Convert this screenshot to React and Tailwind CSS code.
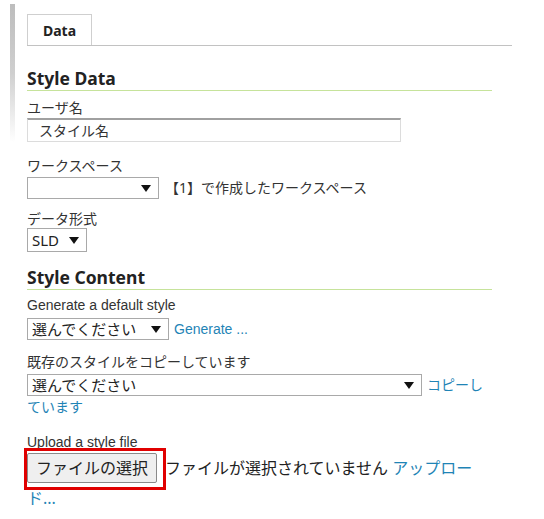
import React from "react";

const font = "font-['Noto_Sans','Noto_Sans_CJK_JP',sans-serif]";

const Arrow = () => (
  <svg width="10" height="7" viewBox="0 0 10 7" className="shrink-0">
    <path d="M0 0 L10 0 L5 7 Z" fill="#111" />
  </svg>
);

const Select = ({ width, value, textSize = "text-[15px]", height = "h-[22px]" }) => (
  <div
    className={`${width} ${height} flex items-center justify-between border border-[#a9a9a9] bg-white pl-[4px] pr-[7px] ${textSize} text-[#222] leading-none`}
  >
    <span>{value}</span>
    <Arrow />
  </div>
);

const Heading = ({ children }) => (
  <div className="w-[465px] border-b border-[#c6e39b] pb-[1px]">
    <h2 className="text-[17.5px] font-bold text-[#222] leading-[22px]">{children}</h2>
  </div>
);

const Label = ({ children, latin }) => (
  <div
    className={`${latin ? "font-['Liberation_Sans',sans-serif]" : ""} text-[14px] text-[#333] leading-[18px] h-[18px]`}
  >
    {children}
  </div>
);

export default function App() {
  return (
    <div className={`flex bg-white min-h-[519px] ${font}`}>
      <div className="ml-[10px] mt-[4px] w-[5px] h-[138px] bg-linear-to-b from-[#bdbdbd] via-[#cfcfcf] to-white" />
      <div className="ml-[12px] flex flex-col">
        {/* tabs */}
        <div className="mt-[14px] w-[485px] border-b border-[#c2c2c2] flex">
          <div className="w-[65px] h-[31px] border border-b-0 border-[#cfcfcf] flex items-center justify-center text-[14px] font-bold text-[#222]">
            Data
          </div>
        </div>

        <div className="mt-[21px]">
          <Heading>Style Data</Heading>
        </div>

        <div className="mt-[8px]">
          <Label>ユーザ名</Label>
        </div>
        <div className="mt-[1px] w-[374px] h-[24px] border border-[#dcdcdc] border-t-[#a0a0a0] border-t-2 flex items-center pl-[11px] text-[14px] text-[#333]">
          スタイル名
        </div>

        <div className="mt-[15px]">
          <Label>ワークスペース</Label>
        </div>
        <div className="mt-[2px] flex items-center gap-[6px] h-[22px]">
          <Select width="w-[132px]" value="" />
          <span className="text-[14px] text-[#333] leading-none">【1】で作成したワークスペース</span>
        </div>

        <div className="mt-[11px]">
          <Label>データ形式</Label>
        </div>
        <div className="mt-[0px]">
          <Select width="w-[60px]" value="SLD" textSize="text-[15px]" height="h-[24px]" />
        </div>

        <div className="mt-[14px]">
          <Heading>Style Content</Heading>
        </div>

        <div className="mt-[6px]">
          <Label latin>Generate a default style</Label>
        </div>
        <div className="mt-[4px] flex items-center gap-[5px] h-[22px]">
          <Select width="w-[142px]" value="選んでください" />
          <a className="font-['Liberation_Sans',sans-serif] text-[14px] text-[#1f84b6] leading-none">Generate ...</a>
        </div>

        <div className="mt-[13px]">
          <Label>既存のスタイルをコピーしています</Label>
        </div>
        <div className="mt-[3px] w-[465px] text-[14px] leading-[22px]">
          <span className="inline-block align-top mr-[5px]">
            <Select width="w-[395px]" value="選んでください" />
          </span>
          <a className="text-[#1f84b6]">コピーしています</a>
        </div>

        <div className="mt-[15px]">
          <Label latin>Upload a style file</Label>
        </div>
        <div className="mt-[2px] w-[465px] text-[16px] leading-[20px] text-[#222]">
          <span className="relative inline-block align-top mr-[8px]">
            <button className="block h-[30px] w-[130px] border border-[#8a8a8a] rounded-[2px] bg-[#efefef] text-[16px] text-[#222]">
              ファイルの選択
            </button>
            <span className="absolute left-[-3px] top-[-5px] right-[-9px] bottom-[-7px] border-[3px] border-[#e00000]" />
          </span>
          <span className="inline-block align-top leading-[30px]">ファイルが選択されていません</span>{" "}
          <a className="text-[#1f84b6] leading-[30px]">アップロード...</a>
        </div>
      </div>
    </div>
  );
}
